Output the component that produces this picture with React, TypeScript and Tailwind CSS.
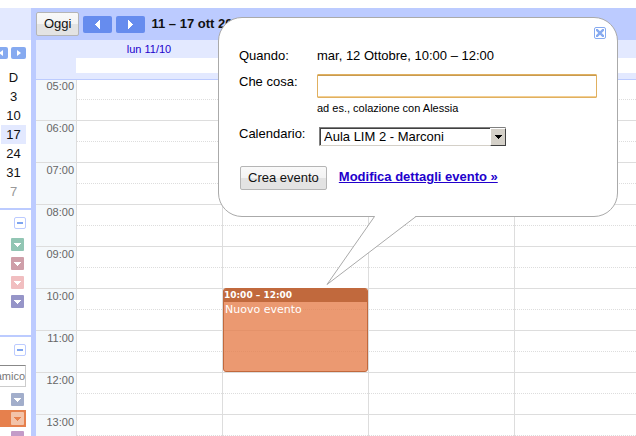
import { useState } from "react";
import type { ReactNode } from "react";

const HOURS = ["05:00", "06:00", "07:00", "08:00", "09:00", "10:00", "11:00", "12:00", "13:00"];

const DAYS = [
  { id: "lun", label: "lun 11/10" },
  { id: "mar", label: "" },
  { id: "mer", label: "" },
  { id: "gio", label: "" },
];

const SUNDAYS = ["3", "10", "17", "24", "31", "7"];

const MY_CALENDARS = ["bg-[#92c6b4]", "bg-[#cf9fa9]", "bg-[#f1bec0]", "bg-[#9695c8]"];

function NavButton({ dir, label }: { dir: "left" | "right"; label: string }) {
  return (
    <button
      type="button"
      aria-label={label}
      className="flex h-[17px] w-[29px] items-center justify-center rounded-[2px] bg-[#668cee]"
    >
      <svg viewBox="0 0 5 9" className="h-[9px] w-[5px]" fill="#fff" shapeRendering="crispEdges">
        <path d={dir === "left" ? "M5 0v9L0 4.5z" : "M0 0v9l5-4.5z"} />
      </svg>
    </button>
  );
}

function MiniNavButton({ dir, label }: { dir: "left" | "right"; label: string }) {
  return (
    <button
      type="button"
      aria-label={label}
      className="flex h-3 w-[15px] shrink-0 items-center justify-center rounded-[2px] bg-[#86aaf0]"
    >
      <svg viewBox="0 0 4 6" className="h-[6px] w-1" fill="#fff">
        <path d={dir === "left" ? "M4 0v6L0 3z" : "M0 0v6l4-3z"} />
      </svg>
    </button>
  );
}

function CollapseButton({ label }: { label: string }) {
  return (
    <button
      type="button"
      aria-label={label}
      className="flex h-3 w-3 items-center justify-center rounded-[2px] border border-[#bccbff] bg-white"
    >
      <span className="h-[2px] w-[6px] bg-[#7fa5ef]" />
    </button>
  );
}

function CalendarMenu({ color, arrow = "#fff" }: { color: string; arrow?: string }) {
  return (
    <button
      type="button"
      aria-label="Opzioni calendario"
      className={`flex h-[13px] w-[13px] shrink-0 items-center justify-center rounded-[1px] ${color}`}
    >
      <svg viewBox="0 0 7 4" className="h-1 w-[7px]" fill={arrow} shapeRendering="crispEdges">
        <path d="M0 0h7L3.5 4z" />
      </svg>
    </button>
  );
}

function GreyButton({ children }: { children: ReactNode }) {
  return (
    <button
      type="button"
      className="h-6 rounded-[2px] border border-[#b5b5b5] bg-[linear-gradient(#f9f9f9,#f3f3f3_50%,#e3e3e3_50%)] px-[7px] text-[13px] leading-4 text-[#111]"
    >
      {children}
    </button>
  );
}

function Sidebar() {
  return (
    <aside className="w-[31px] shrink-0 overflow-hidden bg-white">
      <div className="h-8 bg-[#e3e9ff]" />
      <div className="w-[26px]">
        <div className="mt-[7px] flex justify-end gap-[3px]">
          <MiniNavButton dir="left" label="Mese precedente" />
          <MiniNavButton dir="right" label="Mese successivo" />
        </div>
        <ul className="mt-[9px] pl-px text-center text-[13px] leading-[19px] text-[#111]">
          <li>D</li>
          {SUNDAYS.map((day) => (
            <li key={day} className={day === "17" ? "bg-[#e3e9ff]" : day === "7" ? "text-[#999]" : ""}>
              {day}
            </li>
          ))}
        </ul>
      </div>

      <section className="mt-[7px] h-[127px] border-t-2 border-[#bccbff]">
        <div className="flex w-[26px] flex-col items-end pt-[7px]">
          <CollapseButton label="I miei calendari" />
          <div className="mt-[9px] flex flex-col gap-[6px] pr-[2px]">
            {MY_CALENDARS.map((color) => (
              <CalendarMenu key={color} color={color} />
            ))}
          </div>
        </div>
      </section>

      <section className="border-t-2 border-[#bccbff]">
        <div className="flex w-[26px] flex-col items-end pt-[7px]">
          <CollapseButton label="Altri calendari" />
          <input
            aria-label="Aggiungi il calendario di un amico"
            defaultValue="amico"
            className="mt-[9px] h-[22px] w-10 shrink-0 border border-[#ccc] border-t-[#888] bg-white text-right text-[11px] text-[#777] outline-none"
          />
          <div className="mt-1 flex w-full flex-col gap-[2px]">
            <div className="flex h-[17px] items-center justify-end pr-[2px]">
              <CalendarMenu color="bg-[#a2aecb]" />
            </div>
            <div className="flex h-[17px] items-center justify-end bg-[#e6804d] pr-[2px]">
              <CalendarMenu color="bg-[#f3c3a9]" arrow="#e6804d" />
            </div>
            <div className="flex h-[17px] items-center justify-end pr-[2px]">
              <CalendarMenu color="bg-[#c39bc8]" />
            </div>
          </div>
        </div>
      </section>
    </aside>
  );
}

function EventBlock() {
  return (
    <div className="absolute top-[208px] left-0 z-10 h-[84px] w-[145px] overflow-hidden rounded-[3px] border border-[#c1693d] bg-[#e6804d]/80 font-['DejaVu_Sans',sans-serif] text-white">
      <div className="h-[13px] bg-[#c1693d] text-[9px] leading-[13px] font-bold">10:00 – 12:00</div>
      <div className="px-px text-[11px] leading-[15px]">Nuovo evento</div>
    </div>
  );
}

function WeekGrid() {
  return (
    <div className="flex">
      <div className="w-10 shrink-0 bg-[#f4f8fb]">
        {HOURS.map((hour) => (
          <div
            key={hour}
            className="h-[42px] border-b border-[#ddd] pr-[2px] text-right text-[11px] leading-[15px] text-[#666] first:h-[41px] first:leading-[13px]"
          >
            {hour}
          </div>
        ))}
      </div>
      {DAYS.map((day) => (
        <div key={day.id} className="relative w-[146px] shrink-0 border-l border-[#ddd]">
          {HOURS.map((hour) => (
            <div key={hour} className="flex h-[42px] flex-col justify-end first:h-[41px]">
              <div className="h-[22px] border-t border-b border-[#ddd] [border-top-style:dotted]" />
            </div>
          ))}
          {day.id === "mar" && <EventBlock />}
        </div>
      ))}
    </div>
  );
}

function EventBubble() {
  const [title, setTitle] = useState("");
  const [calendar, setCalendar] = useState("Aula LIM 2 - Marconi");

  return (
    <div
      role="dialog"
      aria-label="Nuovo evento"
      className="absolute top-[17px] left-[218px] z-20 h-[200px] w-[400px] rounded-[24px] border border-[#aaa] bg-white px-5 pt-[30px] text-[13px] leading-4 text-black"
    >
      <button
        type="button"
        aria-label="Chiudi"
        className="absolute top-[9px] right-[11px] flex h-3 w-3 items-center justify-center rounded-[2px] border border-[#86aaf0]"
      >
        <svg viewBox="0 0 8 8" className="h-2 w-2" stroke="#86aaf0" strokeWidth="2.4">
          <path d="M0 0l8 8M8 0L0 8" />
        </svg>
      </button>

      <div className="grid grid-cols-[78px_1fr]">
        <span>Quando:</span>
        <span>mar, 12 Ottobre, 10:00 – 12:00</span>

        <label htmlFor="what" className="mt-[10px]">
          Che cosa:
        </label>
        <div className="mt-[10px]">
          <input
            id="what"
            value={title}
            onChange={(e) => setTitle(e.target.value)}
            className="block h-6 w-[280px] rounded-[1px] border border-[#e0b060] bg-white px-1 shadow-[inset_0_1px_0_#c89b50,inset_0_-1px_0_#f3cf93] outline-none"
          />
          <p className="mt-[3px] text-[11px] leading-[14px]">ad es., colazione con Alessia</p>
        </div>

        <label htmlFor="calendar" className="mt-[11px]">
          Calendario:
        </label>
        <div className="relative mt-3 ml-[2px] w-[187px]">
          <select
            id="calendar"
            value={calendar}
            onChange={(e) => setCalendar(e.target.value)}
            className="block h-[19px] w-full appearance-none border border-[#d4d0c8] border-t-[#808080] border-l-[#808080] bg-white pl-1 text-[13px] leading-4 shadow-[inset_1px_1px_0_#404040] outline-none"
          >
            <option>Aula LIM 2 - Marconi</option>
          </select>
          <span className="pointer-events-none absolute top-px right-0 flex h-[18px] w-4 items-center justify-center border border-[#404040] border-t-white border-l-white bg-[#d4d0c8]">
            <svg viewBox="0 0 7 4" className="h-1 w-[7px]" shapeRendering="crispEdges">
              <path d="M0 0h7L3.5 4z" />
            </svg>
          </span>
        </div>
      </div>

      <div className="mt-5 flex gap-3 pl-px">
        <GreyButton>Crea evento</GreyButton>
        <a href="#dettagli" className="pt-[3px] font-bold text-[#2200cc] underline">
          Modifica dettagli evento »
        </a>
      </div>

      <svg
        viewBox="0 0 92 70"
        className="pointer-events-none absolute top-[198px] left-[107px] h-[70px] w-[92px]"
      >
        <path d="M49 0L1 68.500L90 0z" fill="#fff" />
        <path d="M48.500 .5L1 68.500L90 .5" fill="none" stroke="#aaa" />
      </svg>
    </div>
  );
}

export default function App() {
  return (
    <div className="relative flex h-screen overflow-hidden bg-white pt-2 font-['Liberation_Sans',Arial,sans-serif]">
      <Sidebar />
      <main className="min-w-0 flex-1 overflow-hidden border-l-[5px] border-[#bccbff]">
        <header className="flex h-8 items-center bg-[#bccbff]">
          <GreyButton>Oggi</GreyButton>
          <div className="ml-1 flex gap-1">
            <NavButton dir="left" label="Settimana precedente" />
            <NavButton dir="right" label="Settimana successiva" />
          </div>
          <h1 className="ml-[6px] text-[13px] font-bold whitespace-nowrap text-[#111]">11 – 17 ott 2010</h1>
        </header>
        <div className="h-10 border-b border-[#bccbff] bg-[#e3e9ff] pl-10">
          <div className="flex h-[18px]">
            {DAYS.map((day) => (
              <div key={day.id} className="w-[146px] shrink-0 text-center text-[11px] leading-[18px] text-[#2200cc]">
                {day.label}
              </div>
            ))}
          </div>
          <div className="h-[15px] bg-white" />
        </div>
        <WeekGrid />
      </main>
      <EventBubble />
    </div>
  );
}
